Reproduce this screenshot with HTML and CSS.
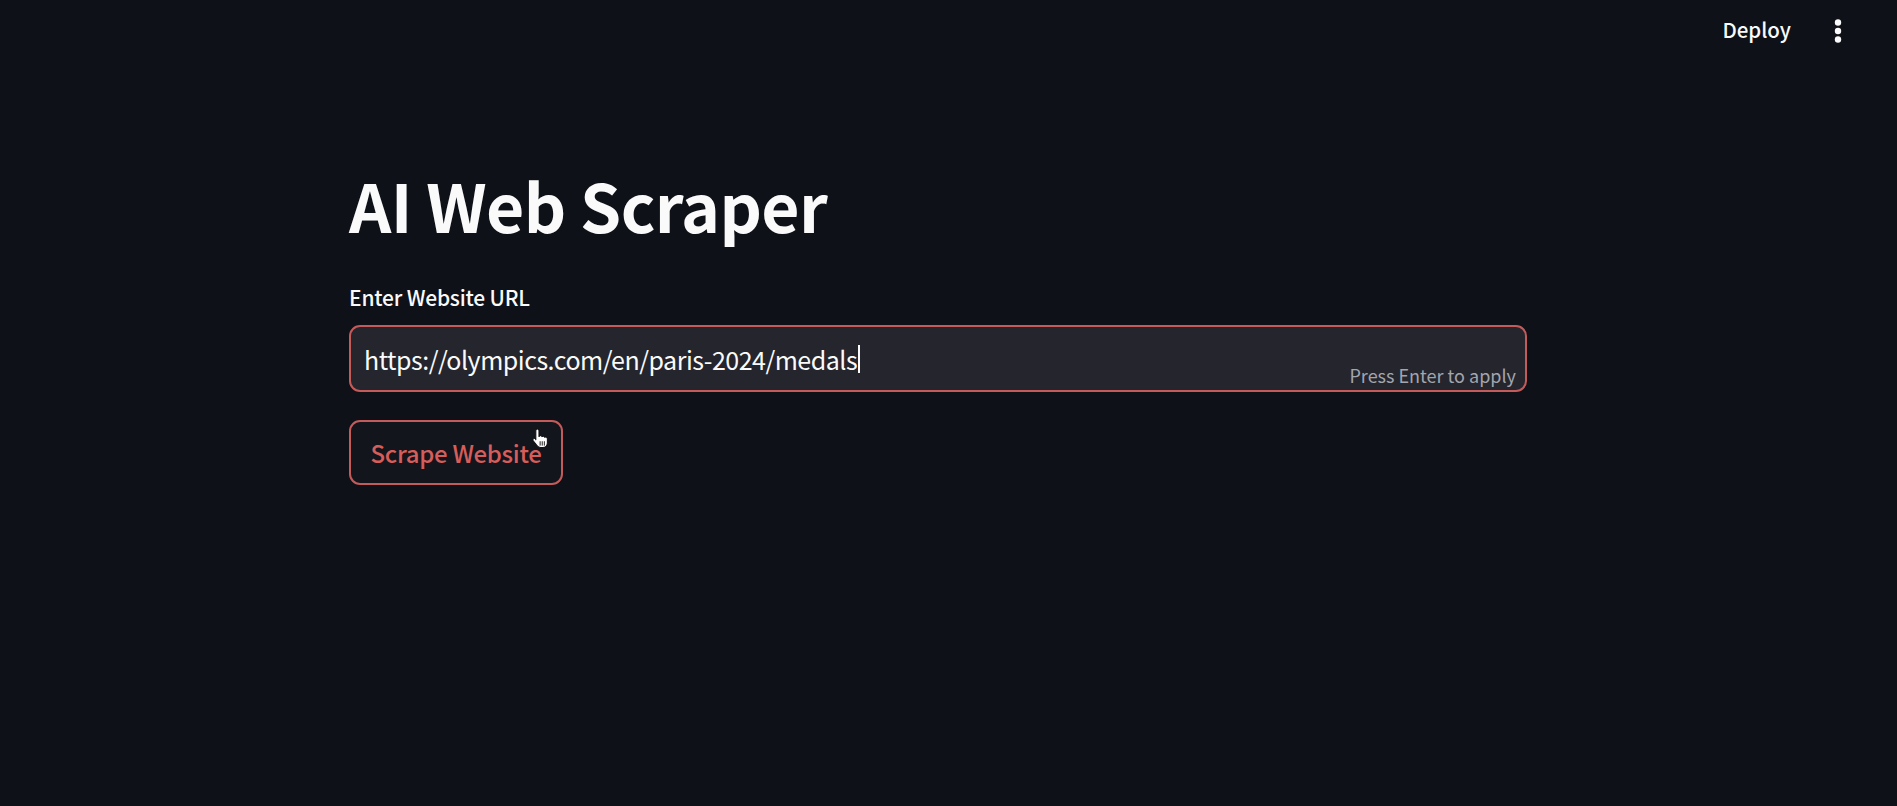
FILE: index.html
```html
<!DOCTYPE html>
<html lang="en">
<head>
<meta charset="utf-8">
<title>AI Web Scraper</title>
<link rel="stylesheet" href="styles.css">
</head>
<body>
<header class="topbar">
  <span class="deploy">Deploy</span>
  <span class="menu" aria-label="Main menu">
    <svg width="8" height="24" viewBox="0 0 8 24"><circle cx="4" cy="3.5" r="3.2" fill="#fafafa"/><circle cx="4" cy="12" r="3.2" fill="#fafafa"/><circle cx="4" cy="20.5" r="3.2" fill="#fafafa"/></svg>
  </span>
</header>
<main class="main">
  <h1 class="title">AI Web Scraper</h1>
  <label class="label">Enter Website URL</label>
  <div class="input">
    <span class="value">https://olympics.com/en/paris-2024/medals</span><span class="caret"></span>
    <span class="hint">Press Enter to apply</span>
  </div>
  <div class="btnrow">
    <button class="btn">Scrape Website</button>
    <svg class="pointer" width="17" height="21" viewBox="0 0 16 20"><path d="M6 1c.8 0 1.5.7 1.5 1.5V8h.2c.3-.6 1-.9 1.7-.7.5.1.8.5 1 .9.4-.4 1-.6 1.6-.4.5.2.9.6 1 1.1.4-.3 1-.4 1.5-.2.7.3 1 1 1 1.7V14c0 2.5-1.8 4.5-4.3 4.5H9c-1.4 0-2.6-.7-3.4-1.8L2 12.1c-.5-.7-.3-1.6.4-2 .6-.4 1.4-.3 1.9.3l.2.8V2.5C4.5 1.7 5.2 1 6 1z" fill="#ffffff" stroke="#111111" stroke-width="1" stroke-linejoin="round"/><path d="M8.6 13v3.4M10.6 13v3.4M12.6 13v3.4" stroke="#111111" stroke-width="0.9" stroke-linecap="round"/></svg>
  </div>
</main>
</body>
</html>
```
FILE: styles.css
```css
html, body {
  margin: 0;
  padding: 0;
  background: #0e1117;
  color: #fafafa;
  font-family: "Noto Sans CJK SC", "Source Sans Pro", "Lato", sans-serif;
  height: 100%;
  overflow: hidden;
}
.topbar {
  display: flex;
  justify-content: flex-end;
  align-items: center;
  height: 62px;
  padding-right: 55px;
  gap: 43px;
}
.deploy {
  font-size: 20.5px;
  font-weight: 500;
  color: #fafafa;
  padding-bottom: 4px;
}
.menu {
  display: flex;
  align-items: center;
}
.menu svg { display: block; }
.main {
  width: 1178px;
  margin-left: 349px;
  display: flex;
  flex-direction: column;
}
.title {
  margin: 109px 0 0 0;
  font-size: 66px;
  font-weight: 700;
  line-height: 1;
  letter-spacing: -0.6px;
}
.label {
  margin-top: 50px;
  font-size: 21px;
  font-weight: 500;
  line-height: 1;
  letter-spacing: -0.2px;
}
.input {
  margin-top: 17px;
  position: relative;
  height: 67px;
  box-sizing: border-box;
  border: 2px solid #c45a5a;
  border-radius: 11px;
  background: #24252d;
  display: flex;
  align-items: center;
  padding-left: 13px;
  font-size: 25px;
  letter-spacing: -0.5px;
}
.value { color: #fafafa; }
.caret {
  display: inline-block;
  width: 2px;
  height: 28px;
  background: #fafafa;
  margin-left: 1px;
}
.hint {
  position: absolute;
  right: 9px;
  bottom: 6px;
  font-size: 18px;
  line-height: 1;
  letter-spacing: 0;
  color: #a3a5ae;
}
.btnrow {
  margin-top: 28px;
  position: relative;
  display: flex;
}
.btn {
  height: 65px;
  width: 214px;
  box-sizing: border-box;
  border: 2px solid #c45a5a;
  border-radius: 11px;
  background: #13151c;
  color: #d65d5a;
  font-family: inherit;
  font-size: 24px;
  font-weight: 500;
  letter-spacing: -0.3px;
  padding: 0;
}
.pointer {
  position: absolute;
  left: 182px;
  top: 8px;
}
```
